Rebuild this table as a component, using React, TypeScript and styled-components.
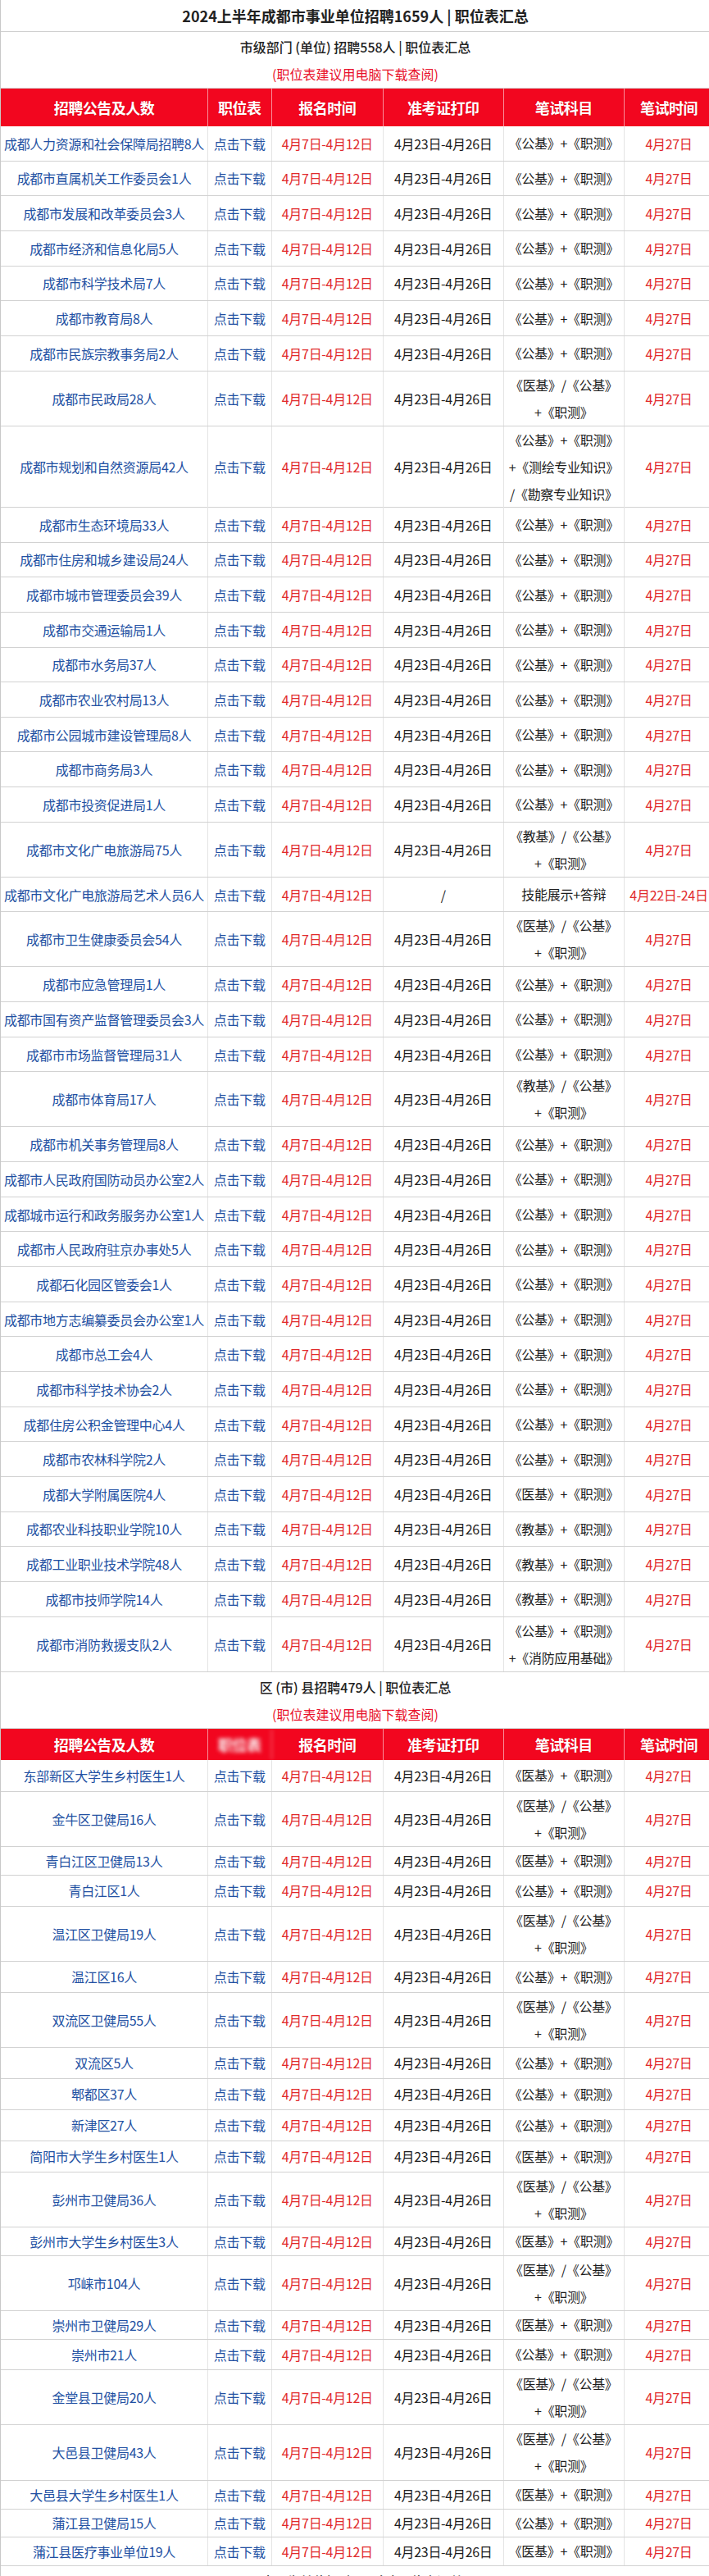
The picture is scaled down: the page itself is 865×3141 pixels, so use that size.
import React from 'react';
import styled, { createGlobalStyle } from 'styled-components';

const GlobalStyle = createGlobalStyle`
  html, body {
    margin: 0;
    padding: 0;
    background: #fff;
    overflow-x: hidden;
  }
  body {
    font-family: "Noto Sans CJK SC", "Noto Sans", sans-serif;
    font-size: 16px;
    color: #222;
  }
`;

// column widths measured from the screenshot (last column runs past the viewport)
const COLS = '253px 77.5px 136.5px 146.5px 147.5px 109px';

const Sheet = styled.div`
  width: 870px;
  border-left: 1px solid #c8c8c8;
`;

const TitleRow = styled.div`
  height: 39px;
  display: flex;
  align-items: center;
  justify-content: center;
  border-bottom: 1px solid #cfcfcf;
  box-sizing: border-box;
  padding-right: 5px;
  font-size: 18px;
  font-weight: 700;
  color: #222;
`;

const SectionHead = styled.div`
  height: 69px;
  box-sizing: border-box;
  padding: 2px 5px 2px 0;
  display: flex;
  flex-direction: column;
  align-items: center;
  border-bottom: 1px solid #d4d4d4;
`;

const SectionTitle = styled.div`
  height: 33px;
  line-height: 33px;
  font-size: 16px;
  font-weight: 500;
  color: #222;
`;

const Note = styled.div`
  height: 32px;
  line-height: 32px;
  font-size: 16px;
  color: #e8102a;
`;

const HeadRow = styled.div<{ $h: number }>`
  display: grid;
  grid-template-columns: ${COLS};
  height: ${({ $h }) => $h}px;
  background: #f2061f;
`;

const HeadCell = styled.div<{ $blur?: boolean }>`
  display: flex;
  align-items: center;
  justify-content: center;
  border-right: 1px solid rgba(255, 255, 255, 0.55);
  color: #fff;
  font-size: 18px;
  font-weight: 700;
  letter-spacing: -0.5px;
  text-shadow: 0 0 1px rgba(120, 0, 0, 0.4);
  filter: ${({ $blur }) => ($blur ? 'blur(2.5px)' : 'none')};
`;

const DataRow = styled.div<{ $h: number }>`
  display: grid;
  grid-template-columns: ${COLS};
  height: ${({ $h }) => $h}px;
  box-sizing: border-box;
  border-bottom: 1px solid #d2d2d2;
`;

type Tone = 'link' | 'date' | 'plain';

const toneColor: Record<Tone, string> = {
  link: '#2250a2',
  date: '#e12a2c',
  plain: '#1c1c1c',
};

const Cell = styled.div<{ $tone: Tone }>`
  display: flex;
  flex-direction: column;
  align-items: center;
  justify-content: center;
  border-right: 1px solid #e4e4e4;
  white-space: nowrap;
  overflow: visible;
  font-size: 16px;
  letter-spacing: -0.3px;
  color: ${({ $tone }) => toneColor[$tone]};
`;

const ExamLine = styled.span`
  line-height: 33px;
`;

type Item = {
  name: string;
  exam?: string[];
  print?: string;
  date?: string;
  h?: number;
};

const GJ = ['《公基》+《职测》'];
const YJ = ['《医基》+《职测》'];
const JJ = ['《教基》+《职测》'];
const YG = ['《医基》/《公基》', '+《职测》'];
const JG = ['《教基》/《公基》', '+《职测》'];

const cityRows: Item[] = [
  { name: '成都人力资源和社会保障局招聘8人' },
  { name: '成都市直属机关工作委员会1人' },
  { name: '成都市发展和改革委员会3人' },
  { name: '成都市经济和信息化局5人' },
  { name: '成都市科学技术局7人' },
  { name: '成都市教育局8人' },
  { name: '成都市民族宗教事务局2人' },
  { name: '成都市民政局28人', exam: YG },
  { name: '成都市规划和自然资源局42人', exam: ['《公基》+《职测》', '+《测绘专业知识》', '/《勘察专业知识》'] },
  { name: '成都市生态环境局33人' },
  { name: '成都市住房和城乡建设局24人' },
  { name: '成都市城市管理委员会39人' },
  { name: '成都市交通运输局1人' },
  { name: '成都市水务局37人' },
  { name: '成都市农业农村局13人' },
  { name: '成都市公园城市建设管理局8人' },
  { name: '成都市商务局3人' },
  { name: '成都市投资促进局1人' },
  { name: '成都市文化广电旅游局75人', exam: JG },
  { name: '成都市文化广电旅游局艺术人员6人', print: '/', exam: ['技能展示+答辩'], date: '4月22日-24日' },
  { name: '成都市卫生健康委员会54人', exam: YG },
  { name: '成都市应急管理局1人' },
  { name: '成都市国有资产监督管理委员会3人' },
  { name: '成都市市场监督管理局31人' },
  { name: '成都市体育局17人', exam: JG },
  { name: '成都市机关事务管理局8人' },
  { name: '成都市人民政府国防动员办公室2人' },
  { name: '成都城市运行和政务服务办公室1人' },
  { name: '成都市人民政府驻京办事处5人' },
  { name: '成都石化园区管委会1人' },
  { name: '成都市地方志编纂委员会办公室1人' },
  { name: '成都市总工会4人' },
  { name: '成都市科学技术协会2人' },
  { name: '成都住房公积金管理中心4人' },
  { name: '成都市农林科学院2人' },
  { name: '成都大学附属医院4人', exam: YJ },
  { name: '成都农业科技职业学院10人', exam: JJ },
  { name: '成都工业职业技术学院48人', exam: JJ },
  { name: '成都市技师学院14人', exam: JJ },
  { name: '成都市消防救援支队2人', exam: ['《公基》+《职测》', '+《消防应用基础》'] },
];

const districtRows: Item[] = [
  { name: '东部新区大学生乡村医生1人', exam: YJ, h: 39 },
  { name: '金牛区卫健局16人', exam: YG, h: 67 },
  { name: '青白江区卫健局13人', exam: YJ, h: 35 },
  { name: '青白江区1人', exam: GJ, h: 38 },
  { name: '温江区卫健局19人', exam: YG, h: 67 },
  { name: '温江区16人', exam: GJ, h: 38 },
  { name: '双流区卫健局55人', exam: YG, h: 67 },
  { name: '双流区5人', exam: GJ, h: 38 },
  { name: '郫都区37人', exam: GJ, h: 38 },
  { name: '新津区27人', exam: GJ, h: 38 },
  { name: '简阳市大学生乡村医生1人', exam: YJ, h: 38 },
  { name: '彭州市卫健局36人', exam: YG, h: 67 },
  { name: '彭州市大学生乡村医生3人', exam: YJ, h: 35 },
  { name: '邛崃市104人', exam: YG, h: 67 },
  { name: '崇州市卫健局29人', exam: YJ, h: 35 },
  { name: '崇州市21人', exam: GJ, h: 37 },
  { name: '金堂县卫健局20人', exam: YG, h: 67 },
  { name: '大邑县卫健局43人', exam: YG, h: 68 },
  { name: '大邑县大学生乡村医生1人', exam: YJ, h: 35 },
  { name: '蒲江县卫健局15人', exam: GJ, h: 34 },
  { name: '蒲江县医疗事业单位19人', exam: YJ, h: 35 },
];

const heightFor = (lines: number) => (lines === 1 ? 42.67 : lines === 2 ? 67 : 99.3);

const HEADINGS = ['招聘公告及人数', '职位表', '报名时间', '准考证打印', '笔试科目', '笔试时间'];

const Header: React.FC<{ h: number; blurSecond?: boolean }> = ({ h, blurSecond }) => (
  <HeadRow $h={h}>
    {HEADINGS.map((t, i) => (
      <HeadCell key={t} $blur={blurSecond && i === 1}>
        {t}
      </HeadCell>
    ))}
  </HeadRow>
);

const Rows: React.FC<{ items: Item[] }> = ({ items }) => (
  <>
    {items.map((r) => {
      const exam = r.exam ?? GJ;
      return (
        <DataRow key={r.name} $h={r.h ?? heightFor(exam.length)}>
          <Cell $tone="link">{r.name}</Cell>
          <Cell $tone="link">点击下载</Cell>
          <Cell $tone="date">4月7日-4月12日</Cell>
          <Cell $tone="plain">{r.print ?? '4月23日-4月26日'}</Cell>
          <Cell $tone="plain">
            {exam.map((line) => (
              <ExamLine key={line}>{line}</ExamLine>
            ))}
          </Cell>
          <Cell $tone="date">{r.date ?? '4月27日'}</Cell>
        </DataRow>
      );
    })}
  </>
);

const App: React.FC = () => (
  <>
    <GlobalStyle />
    <Sheet>
      <TitleRow>2024上半年成都市事业单位招聘1659人 | 职位表汇总</TitleRow>

      <SectionHead>
        <SectionTitle>市级部门 (单位) 招聘558人 | 职位表汇总</SectionTitle>
        <Note>(职位表建议用电脑下载查阅)</Note>
      </SectionHead>
      <Header h={46} />
      <Rows items={cityRows} />

      <SectionHead>
        <SectionTitle>区 (市) 县招聘479人 | 职位表汇总</SectionTitle>
        <Note>(职位表建议用电脑下载查阅)</Note>
      </SectionHead>
      <Header h={38} blurSecond />
      <Rows items={districtRows} />

      <SectionHead>
        <SectionTitle>医疗卫生单位招聘622人 | 职位表汇总</SectionTitle>
        <Note>(职位表建议用电脑下载查阅)</Note>
      </SectionHead>
    </Sheet>
  </>
);

export default App;
